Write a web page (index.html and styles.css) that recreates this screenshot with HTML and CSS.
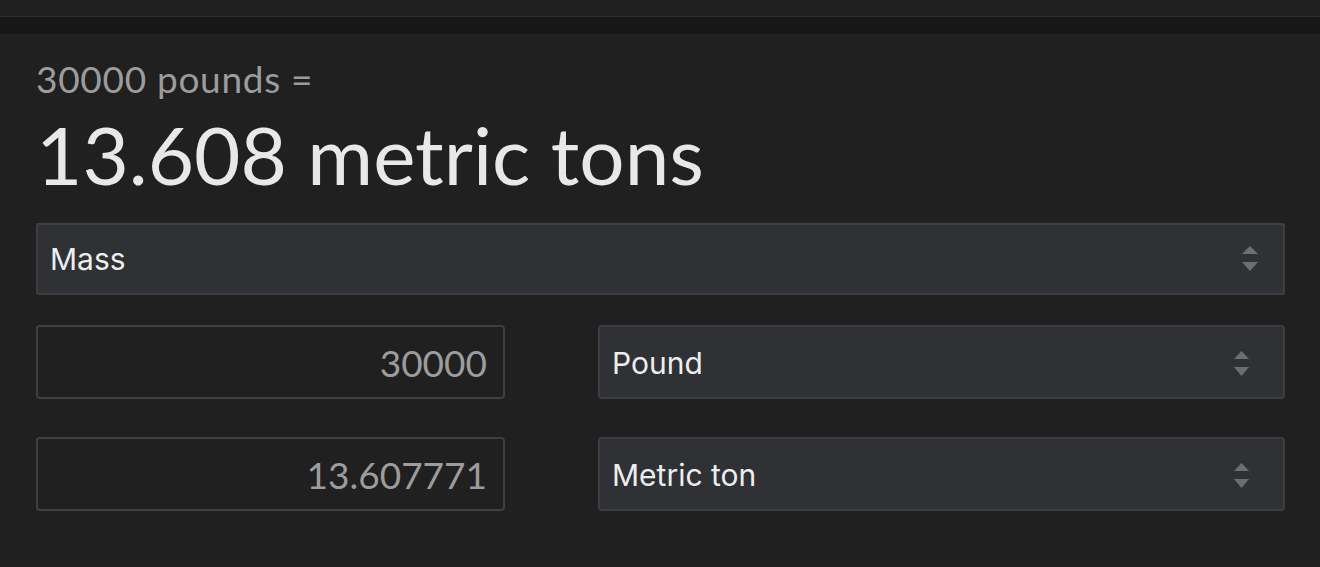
FILE: index.html
```html
<!DOCTYPE html>
<html>
<head>
<meta charset="utf-8">
<link rel="stylesheet" href="styles.css">
</head>
<body>
<div class="topbar"></div>
<div class="band"></div>
<main class="converter">
  <div class="lead">30000 pounds =</div>
  <div class="result">13.608 metric tons</div>
  <div class="select select-wide">
    <span>Mass</span>
    <svg class="arrows" width="16" height="26" viewBox="0 0 16 26"><path d="M8 0 L16 8 H0 Z M0 16 H16 L8 25 Z" fill="#6d6e71"/></svg>
  </div>
  <div class="row">
    <div class="field">30000</div>
    <div class="select">
      <span>Pound</span>
      <svg class="arrows" width="15" height="25" viewBox="0 0 15 25"><path d="M7.5 0 L15 8 H0 Z M0 16 H15 L7.5 25 Z" fill="#6d6e71"/></svg>
    </div>
  </div>
  <div class="row">
    <div class="field">13.607771</div>
    <div class="select">
      <span>Metric ton</span>
      <svg class="arrows" width="15" height="25" viewBox="0 0 15 25"><path d="M7.5 0 L15 8 H0 Z M0 16 H15 L7.5 25 Z" fill="#6d6e71"/></svg>
    </div>
  </div>
</main>
</body>
</html>
```

FILE: styles.css
```css
html, body {
  margin: 0;
  padding: 0;
  background: #202020;
}
body {
  font-family: Lato, "Open Sans", sans-serif;
}
.topbar {
  height: 16px;
  border-bottom: 1px solid #2a2e32;
  background: #202020;
}
.band {
  height: 17px;
  background: #171717;
}
.converter {
  padding: 23px 35px 0 36px;
}
.lead {
  font-size: 37px;
  line-height: 44px;
  letter-spacing: 0.7px;
  color: #9c9c9c;
}
.result {
  margin-top: 5px;
  font-size: 80px;
  line-height: 96px;
  color: #e8e8e8;
}
.select {
  box-sizing: border-box;
  height: 74px;
  display: flex;
  align-items: center;
  justify-content: space-between;
  background: #303134;
  border: 2px solid #3c3e42;
  border-radius: 4px;
  padding: 2px 34px 0 12px;
  font-family: Inter, "Liberation Sans", sans-serif;
  font-size: 30px;
  color: #eceef0;
}
.select-wide {
  margin-top: 21px;
  height: 72px;
  border-radius: 2px;
  padding: 0 25px 0 12px;
}
.row {
  display: grid;
  grid-template-columns: 469px 687px;
  justify-content: space-between;
  margin-top: 30px;
}
.row + .row {
  margin-top: 38px;
}
.field {
  box-sizing: border-box;
  height: 74px;
  border: 2px solid #3c3f43;
  border-radius: 4px;
  display: flex;
  align-items: center;
  justify-content: flex-end;
  padding-right: 16px;
  font-size: 37px;
  color: #9c9c9c;
}
.arrows {
  display: block;
}
```
